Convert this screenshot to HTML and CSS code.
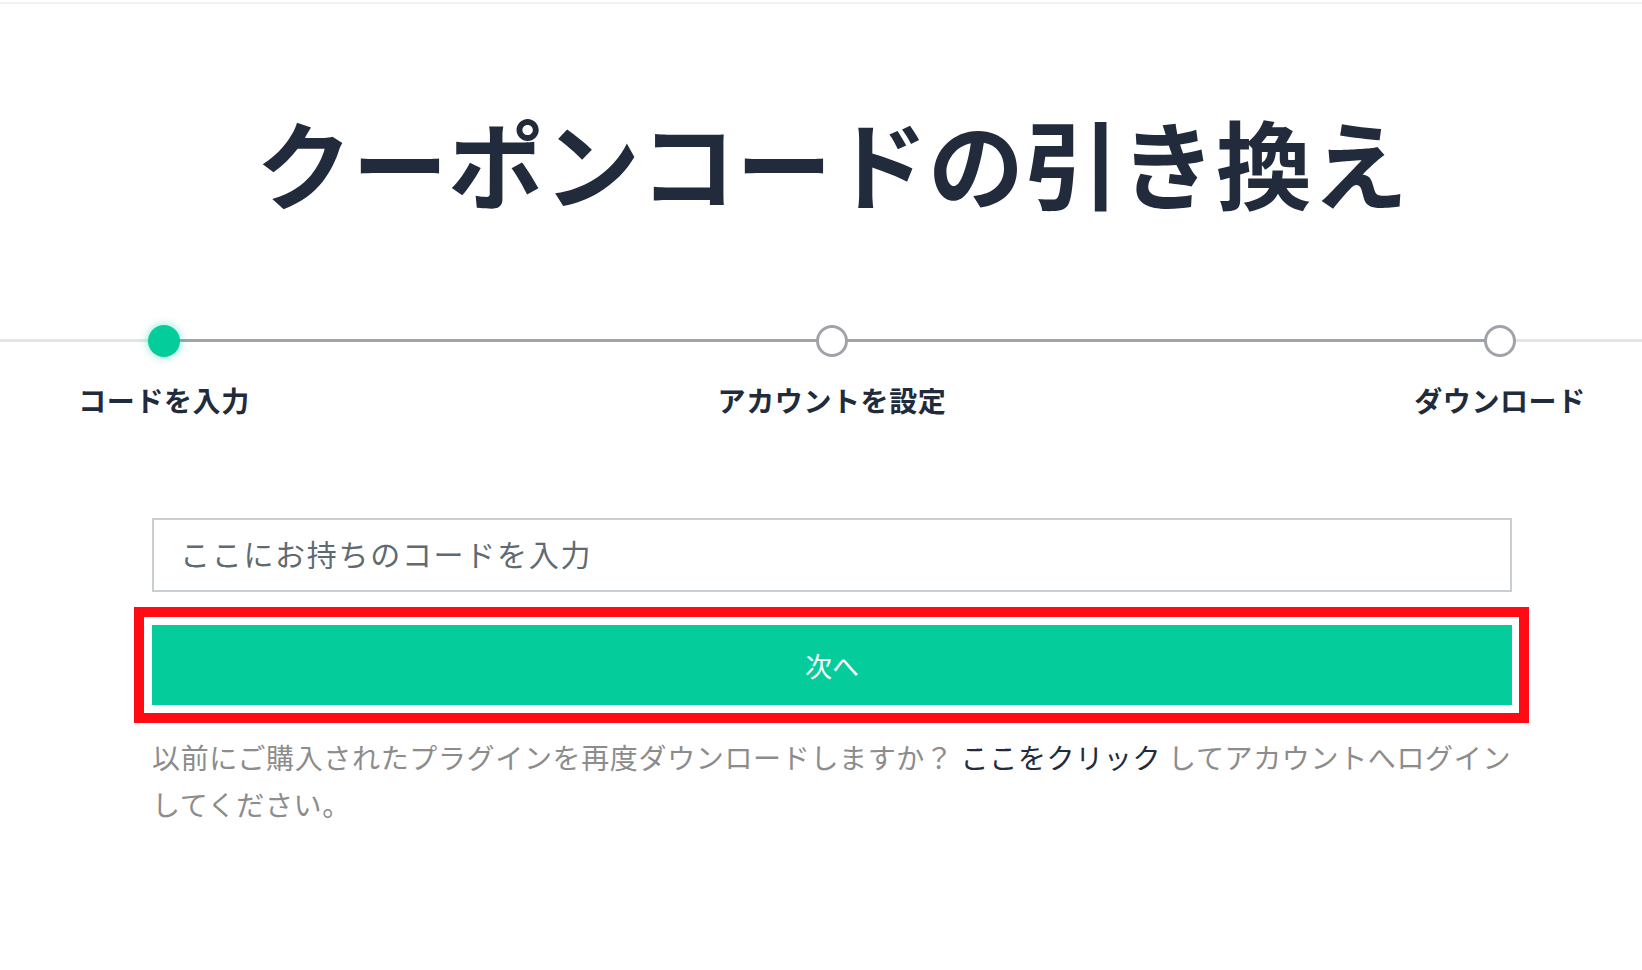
FILE: index.html
```html
<!DOCTYPE html>
<html lang="ja">
<head>
<meta charset="utf-8">
<title>クーポンコードの引き換え</title>
<link rel="stylesheet" href="styles.css">
</head>
<body>
<div class="topline"></div>
<header class="page">
  <h1 class="title">クーポンコードの引き換え</h1>
</header>
<section class="stepper-band">
  <ol class="steps">
    <li class="step is-active">
      <span class="dot"></span>
      <span class="step-label">コードを入力</span>
    </li>
    <li class="step">
      <span class="dot"></span>
      <span class="step-label">アカウントを設定</span>
    </li>
    <li class="step">
      <span class="dot"></span>
      <span class="step-label">ダウンロード</span>
    </li>
  </ol>
</section>
<main class="page form">
  <input class="code-input" type="text" placeholder="ここにお持ちのコードを入力">
  <div class="btn-wrap">
    <button class="next-btn" type="button">次へ</button>
    <span class="highlight"></span>
  </div>
  <p class="note"><span class="phrase">以前にご購入されたプラグインを再度ダウンロードしますか？</span> <a class="note-link" href="#">ここをクリック</a> <span class="phrase">してアカウントへログイン</span><span class="phrase">してください。</span></p>
</main>
</body>
</html>
```

FILE: styles.css
```css
html, body {
  margin: 0;
  padding: 0;
  background: #ffffff;
}

body {
  padding-top: 2px;
  font-family: "Noto Sans CJK JP", "Noto Sans", sans-serif;
  color: #222b3c;
}

.topline {
  height: 2px;
  background: #f1f1f2;
}

.page {
  width: 1360px;
  margin-left: 152px;
}

.title {
  margin: 99px 0 0;
  font-size: 96px;
  line-height: 116px;
  font-weight: 700;
  text-align: center;
  color: #222b3c;
  letter-spacing: 0;
}

/* stepper */
.stepper-band {
  position: relative;
  margin-top: 106px;
}

.stepper-band::before {
  content: "";
  position: absolute;
  left: 0;
  right: 0;
  top: 14px;
  height: 3px;
  background: #e4e5e8;
}

.steps {
  position: relative;
  list-style: none;
  margin: 0 0 0 152px;
  padding: 0 12px;
  width: 1336px;
  display: flex;
  justify-content: space-between;
}

.steps::before {
  content: "";
  position: absolute;
  left: 12px;
  right: 12px;
  top: 14px;
  height: 3px;
  background: #a1a3aa;
}

.step {
  width: 0;
  display: flex;
  flex-direction: column;
  align-items: center;
}

.dot {
  position: relative;
  flex: none;
  width: 32px;
  height: 32px;
  box-sizing: border-box;
  border-radius: 50%;
  border: 3px solid #a1a3aa;
  background: #ffffff;
}

.step.is-active .dot {
  border: none;
  background: #04cd9b;
  box-shadow: 0 0 7px 2px rgba(4, 205, 155, 0.3);
}

.step-label {
  margin-top: 23px;
  font-size: 28px;
  line-height: 40px;
  font-weight: 700;
  white-space: nowrap;
  letter-spacing: 0.6px;
  color: #222b3c;
}

/* form */
.form {
  margin-top: 98px;
}

.code-input {
  display: block;
  box-sizing: border-box;
  width: 100%;
  height: 74px;
  margin: 0;
  padding: 0 26px 4px;
  border: 2px solid #c9ced4;
  border-radius: 0;
  background: #ffffff;
  font-family: "Noto Sans CJK JP", "Noto Sans", sans-serif;
  font-size: 30px;
  letter-spacing: 1.7px;
  color: #222b3c;
  outline: none;
}

.code-input::placeholder {
  color: #5f6a72;
  opacity: 1;
}

.btn-wrap {
  position: relative;
  margin-top: 33px;
}

.next-btn {
  display: block;
  width: 100%;
  height: 80px;
  margin: 0;
  padding: 0;
  border: none;
  border-radius: 0;
  background: #04cd9b;
  color: #ffffff;
  font-family: "Noto Sans CJK JP", "Noto Sans", sans-serif;
  font-size: 27px;
  font-weight: 400;
  cursor: pointer;
}

.highlight {
  position: absolute;
  top: -18px;
  left: -18px;
  right: -17px;
  bottom: -18px;
  border: 10px solid #ff0b14;
  pointer-events: none;
}

.note {
  margin: 29px 0 0;
  font-size: 28px;
  line-height: 47px;
  letter-spacing: 0.65px;
  color: #8c8c8c;
}

.phrase {
  white-space: nowrap;
}

.note-link {
  color: #222b3c;
  text-decoration: none;
  white-space: nowrap;
}
```
